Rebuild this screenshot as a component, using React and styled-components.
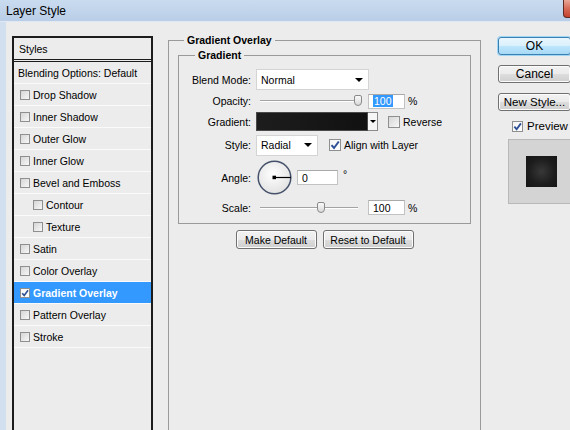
import React from 'react'
import styled, { createGlobalStyle } from 'styled-components'

const GlobalStyle = createGlobalStyle`
  html, body {
    margin: 0;
    padding: 0;
    overflow: hidden;
    background: #ececec;
  }
  body {
    font-family: 'Liberation Sans', Tahoma, Arial, sans-serif;
    font-size: 10.5px;
    color: #000;
  }
`

const Window = styled.div`
  width: 606px;
  height: 430px;
  display: flex;
  flex-direction: column;
  background: #ececec;
  overflow: hidden;
`

const TitleBar = styled.div`
  flex: none;
  height: 21px;
  display: flex;
  align-items: flex-start;
  background: linear-gradient(#c9dbef, #b9cee7);
  border-bottom: 1px solid #dfe8f3;
`

const Title = styled.div`
  padding: 4px 0 0 6px;
  font-size: 12px;
  line-height: 14px;
`

const CloseButton = styled.div`
  margin-left: auto;
  width: 43px;
  height: 18px;
  box-sizing: border-box;
  border: 1px solid #5e2a22;
  border-top: none;
  border-radius: 0 0 4px 4px;
  background: linear-gradient(#e9a797, #d66b57 50%, #c4412c);
`

const Body = styled.div`
  flex: 1;
  display: flex;
  align-items: flex-start;
  border-left: 6px solid #d2dfee;
  overflow: hidden;
`

/* ---------- left styles list ---------- */

const StylesList = styled.div`
  flex: none;
  width: 141px;
  height: 420px;
  margin: 14px 0 0 6px;
  box-sizing: border-box;
  border: 2px solid #1c1c1c;
`

const ListHeader = styled.div`
  height: 21px;
  display: flex;
  align-items: center;
  padding-left: 5px;
  border-bottom: 3px double #1c1c1c;
`

const ListRow = styled.div`
  height: 21px;
  display: flex;
  align-items: center;
  gap: 3px;
  padding-left: ${p => (p.$sub ? 19 : p.$plain ? 4 : 6)}px;
  border-bottom: 1px solid #fafafa;
  background: ${p => (p.$selected ? '#3399ff' : 'transparent')};
  color: ${p => (p.$selected ? '#fff' : '#000')};
  font-weight: ${p => (p.$selected ? 'bold' : 'normal')};
  white-space: nowrap;
`

const Box = styled.span`
  flex: none;
  display: inline-flex;
  align-items: center;
  justify-content: center;
  width: ${p => p.$size}px;
  height: ${p => p.$size}px;
  box-sizing: border-box;
  border: 1px solid #8e8f8f;
  background: ${p => (p.$checked
    ? 'linear-gradient(135deg, #f4f4f4, #ffffff)'
    : 'linear-gradient(135deg, #d6d6d6, #f7f7f7)')};
`

const Checkbox = ({ checked, size = 10 }) => (
  <Box $checked={checked} $size={size}>
    {checked && (
      <svg width={size - 2} height={size - 2} viewBox="0 0 10 10">
        <path d="M1.5 5.2 L4 8 L8.8 1.5" fill="none" stroke="#2c4f95" strokeWidth="2" />
      </svg>
    )}
  </Box>
)

const effects = [
  { name: 'Drop Shadow' },
  { name: 'Inner Shadow' },
  { name: 'Outer Glow' },
  { name: 'Inner Glow' },
  { name: 'Bevel and Emboss' },
  { name: 'Contour', sub: true },
  { name: 'Texture', sub: true },
  { name: 'Satin' },
  { name: 'Color Overlay' },
  { name: 'Gradient Overlay', on: true },
  { name: 'Pattern Overlay' },
  { name: 'Stroke' },
]

/* ---------- group boxes ---------- */

const Group = styled.fieldset`
  margin: 12px 0 0 15px;
  padding: 2px 9px 0;
  width: 313px;
  height: 420px;
  box-sizing: border-box;
  border: 1px solid #9a9a9a;
  min-width: 0;
`

const InnerGroup = styled.fieldset`
  margin: 0;
  padding: 7px 0 7px;
  border: 1px solid #9a9a9a;
  min-width: 0;
  display: flex;
  flex-direction: column;
  gap: 3px;
`

const Legend = styled.legend`
  margin-left: ${p => p.$offset}px;
  padding: 0 3px;
  font-weight: bold;
  font-size: 10.5px;
  line-height: 13px;
`

const Row = styled.div`
  height: ${p => p.$h}px;
  display: flex;
  align-items: center;
`

const Label = styled.span`
  flex: none;
  width: 72px;
  margin-right: 5px;
  text-align: right;
`

const Select = styled.div`
  width: ${p => p.$w}px;
  height: 21px;
  box-sizing: border-box;
  display: flex;
  align-items: center;
  justify-content: space-between;
  padding: 0 5px 0 4px;
  background: #fff;
  border: 1px solid #d4d4d4;
`

const Caret = styled.span`
  width: 0;
  height: 0;
  border-left: 4px solid transparent;
  border-right: 4px solid transparent;
  border-top: 4px solid #000;
`

const Slider = styled.div`
  position: relative;
  flex: none;
  width: 106px;
  height: 12px;
`

const Track = styled.div`
  position: absolute;
  left: 4px;
  right: 4px;
  top: 5px;
  border-top: 1px solid #a3a3a3;
  border-bottom: 1px solid #fff;
`

const Thumb = styled.div`
  position: absolute;
  top: 0;
  width: 8px;
  height: 11px;
  box-sizing: border-box;
  border: 1px solid #8a8a8a;
  border-radius: 2px 2px 4px 4px;
  background: linear-gradient(#fafafa, #d9d9d9);
`

const NumberField = styled.div`
  flex: none;
  width: ${p => p.$w}px;
  height: 15px;
  box-sizing: border-box;
  display: flex;
  align-items: center;
  padding-left: 4px;
  margin-left: ${p => p.$gap || 0}px;
  background: #fff;
  border: 1px solid #c2c2c2;
  border-top-color: #a9a9a9;
`

const Selected = styled.span`
  background: #3399ff;
  color: #fff;
  padding: 0 1px;
`

const Unit = styled.span`
  margin-left: ${p => p.$gap}px;
  align-self: ${p => (p.$raised ? 'flex-start' : 'center')};
  margin-top: ${p => (p.$raised ? 9 : 0)}px;
`

const Swatch = styled.div`
  display: flex;
  height: 19px;
  box-sizing: border-box;
`

const SwatchColor = styled.div`
  width: 112px;
  box-sizing: border-box;
  border: 1px solid #4a4a4a;
  background: linear-gradient(90deg, #1d1d1d, #111);
`

const SwatchButton = styled.div`
  width: 10px;
  display: flex;
  align-items: center;
  justify-content: center;
  box-sizing: border-box;
  border: 1px solid #8a8a8a;
  border-left: none;
  background: #f6f6f6;
`

const SmallCaret = styled(Caret)`
  border-left-width: 3px;
  border-right-width: 3px;
  border-top-width: 3px;
`

const CheckLabel = styled.label`
  display: flex;
  align-items: center;
  gap: ${p => p.$gap}px;
  margin-left: ${p => p.$offset}px;
`

const Dial = styled.svg`
  flex: none;
  margin-left: 1px;
  margin-right: 5px;
`

const ButtonRow = styled.div`
  display: flex;
  justify-content: center;
  gap: 6px;
  margin-top: 6px;
`

const Button = styled.div`
  width: ${p => p.$w}px;
  height: ${p => p.$h}px;
  box-sizing: border-box;
  display: flex;
  align-items: center;
  justify-content: center;
  white-space: nowrap;
  font-size: ${p => p.$fs}px;
  border: 1px solid ${p => (p.$primary ? '#3c7fb1' : '#707070')};
  border-radius: 3px;
  background: ${p => (p.$primary
    ? 'linear-gradient(#eaf6fd, #d9f0fc 50%, #bee6fd 51%, #a7d9f5)'
    : 'linear-gradient(#f2f2f2, #ebebeb 50%, #dddddd 51%, #cfcfcf)')};
  box-shadow: ${p => (p.$primary ? '0 0 0 1px #9fd5f5' : 'inset 0 0 0 1px #fcfcfc')};
`

/* ---------- right column ---------- */

const Side = styled.div`
  flex: none;
  width: 73px;
  margin: 15px 0 0 17px;
  display: flex;
  flex-direction: column;
  gap: 10px;
`

const PreviewCheck = styled(CheckLabel)`
  font-size: 11.5px;
  margin-top: -1px;
`

const Thumbnail = styled.div`
  flex: none;
  width: 67px;
  height: 65px;
  margin: -3px 0 0 10px;
  box-sizing: border-box;
  display: flex;
  align-items: center;
  justify-content: center;
  background: #d4d4d4;
  border: 1px solid #b8b8b8;
`

const ThumbSquare = styled.div`
  width: 31px;
  height: 31px;
  background: radial-gradient(circle, #383838, #1c1c1c 60%, #151515);
`

export default function App() {
  return (
    <>
      <GlobalStyle />
      <Window>
        <TitleBar>
          <Title>Layer Style</Title>
          <CloseButton />
        </TitleBar>
        <Body>
          <StylesList>
            <ListHeader>Styles</ListHeader>
            <ListRow $plain>Blending Options: Default</ListRow>
            {effects.map(e => (
              <ListRow key={e.name} $sub={e.sub} $selected={e.on}>
                <Checkbox checked={e.on} />
                {e.name}
              </ListRow>
            ))}
          </StylesList>

          <Group>
            <Legend $offset={6}>Gradient Overlay</Legend>
            <InnerGroup>
              <Legend $offset={16}>Gradient</Legend>
              <Row $h={21}>
                <Label>Blend Mode:</Label>
                <Select $w={113}>Normal<Caret /></Select>
              </Row>
              <Row $h={16}>
                <Label>Opacity:</Label>
                <Slider>
                  <Track />
                  <Thumb style={{ left: 98 }} />
                </Slider>
                <NumberField $w={37} $gap={6}>
                  <Selected>100</Selected>
                </NumberField>
                <Unit $gap={3}>%</Unit>
              </Row>
              <Row $h={19}>
                <Label>Gradient:</Label>
                <Swatch>
                  <SwatchColor />
                  <SwatchButton><SmallCaret /></SwatchButton>
                </Swatch>
                <CheckLabel $gap={3} $offset={10}>
                  <Checkbox size={12} />
                  Reverse
                </CheckLabel>
              </Row>
              <Row $h={22}>
                <Label>Style:</Label>
                <Select $w={62}>Radial<Caret /></Select>
                <CheckLabel $gap={3} $offset={11}>
                  <Checkbox size={12} checked />
                  Align with Layer
                </CheckLabel>
              </Row>
              <Row $h={37}>
                <Label>Angle:</Label>
                <Dial width="35" height="35" viewBox="0 0 35 35">
                  <defs>
                    <radialGradient id="dialFill" cx="45%" cy="40%" r="60%">
                      <stop offset="0" stopColor="#ffffff" />
                      <stop offset="1" stopColor="#e2e2e2" />
                    </radialGradient>
                  </defs>
                  <circle cx="17.5" cy="17.5" r="16.3" fill="url(#dialFill)" stroke="#46526b" strokeWidth="1.5" />
                  <line x1="17.5" y1="17.5" x2="34" y2="17.5" stroke="#000" strokeWidth="1.2" />
                  <rect x="15.5" y="15.7" width="3.5" height="3.5" fill="#000" />
                </Dial>
                <NumberField $w={41}>0</NumberField>
                <Unit $gap={5} $raised>°</Unit>
              </Row>
              <Row $h={17}>
                <Label>Scale:</Label>
                <Slider>
                  <Track />
                  <Thumb style={{ left: 61 }} />
                </Slider>
                <NumberField $w={37} $gap={6}>100</NumberField>
                <Unit $gap={3}>%</Unit>
              </Row>
            </InnerGroup>
            <ButtonRow>
              <Button $w={81} $h={19} $fs={10.5}>Make Default</Button>
              <Button $w={91} $h={19} $fs={10.5}>Reset to Default</Button>
            </ButtonRow>
          </Group>

          <Side>
            <Button $w={73} $h={18} $fs={12} $primary>OK</Button>
            <Button $w={73} $h={18} $fs={12}>Cancel</Button>
            <Button $w={73} $h={18} $fs={11.5}>New Style...</Button>
            <PreviewCheck $gap={4} $offset={14}>
              <Checkbox size={11} checked />
              Preview
            </PreviewCheck>
            <Thumbnail>
              <ThumbSquare />
            </Thumbnail>
          </Side>
        </Body>
      </Window>
    </>
  )
}
